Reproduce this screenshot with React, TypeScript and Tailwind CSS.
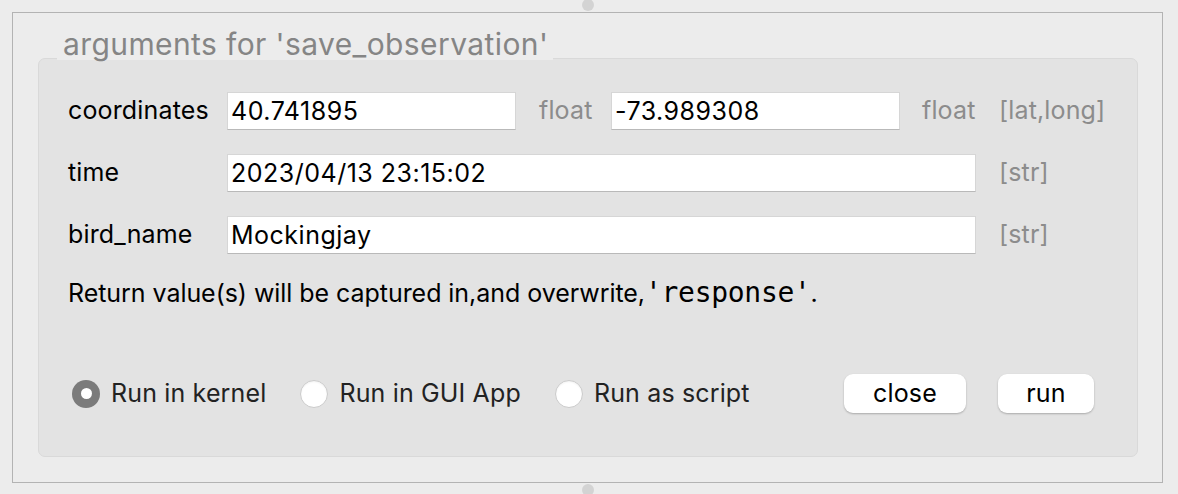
import { useState } from 'react'

const font = { fontFamily: 'Inter, "Noto Sans", sans-serif' }

function Field({ value, wide }: { value: string; wide?: boolean }) {
  return (
    <input
      type="text"
      defaultValue={value}
      className={`h-[38px] bg-white border border-[#d6d6d6] border-b-[#b9b9b9] px-[3px] text-[25px] tracking-[0.5px] text-black outline-none ${
        wide ? 'col-span-4 w-[749px]' : 'w-[289px]'
      }`}
    />
  )
}

function Radio({ checked, label, onClick }: { checked: boolean; label: string; onClick: () => void }) {
  return (
    <button onClick={onClick} className="flex items-center gap-[11px] cursor-default">
      {checked ? (
        <span className="w-[28px] h-[28px] rounded-full bg-[#7b7b7b] flex items-center justify-center">
          <span className="w-[11px] h-[11px] rounded-full bg-white" />
        </span>
      ) : (
        <span className="w-[28px] h-[28px] rounded-full bg-white border border-[#cbcbcb] shadow-[inset_0_1px_2px_rgba(0,0,0,0.06)]" />
      )}
      <span className="text-[25px] tracking-[0.15px] text-[#222]">{label}</span>
    </button>
  )
}

export default function App() {
  const [mode, setMode] = useState('kernel')

  return (
    <div className="w-[1178px] h-[494px] bg-[#ececec] pt-[12px] pl-[12px]" style={font}>
      <div className="relative w-[1151px] h-[471px] border border-[#b3b3b3] pt-[45px] pl-[25px]">
        {/* resize handles */}
        <span className="absolute left-[569px] -top-[14px] w-[12px] h-[12px] rounded-full bg-[#d3d3d3]" />
        <span className="absolute left-[569px] -bottom-[14px] w-[12px] h-[12px] rounded-full bg-[#d3d3d3]" />

        <div className="relative w-[1100px] h-[399px] rounded-[7px] bg-[#e3e3e3] border border-[#d9d9d9] pt-[33px] pl-[29px] text-[25px] tracking-[0.15px]">
          <div className="absolute left-[18px] -top-[30px] h-[31px] w-[496px] bg-[#ececec] pl-[6px] text-[30px] tracking-[0.4px] leading-[30px] text-[#858585]">
            arguments for 'save_observation'
          </div>

          <div className="grid grid-cols-[159px_289px_95px_289px_76px_auto] gap-y-[24px] items-center">
            <div className="text-black">coordinates</div>
            <Field value="40.741895" />
            <div className="pl-[23px] text-[#8c8c8c]">float</div>
            <Field value="-73.989308" />
            <div className="pl-[22px] text-[#8c8c8c]">float</div>
            <div className="pl-[23px] text-[#8c8c8c]">[lat,long]</div>

            <div className="text-black">time</div>
            <Field value="2023/04/13 23:15:02" wide />
            <div className="pl-[23px] text-[#8c8c8c]">[str]</div>

            <div className="text-black">bird_name</div>
            <Field value="Mockingjay" wide />
            <div className="pl-[23px] text-[#8c8c8c]">[str]</div>
          </div>

          <div className="mt-[24px] leading-[30px] tracking-[-0.05px] text-black">
            Return value(s) will be captured in,and overwrite,
            <span className="text-[28px] tracking-[-0.3px]" style={{ fontFamily: '"DejaVu Sans Mono", monospace' }}>
              'response'
            </span>
            .
          </div>

          <div className="mt-[66px] flex items-center pl-[4px] pr-[43px]">
            <div className="flex items-center gap-[34px]">
              <Radio checked={mode === 'kernel'} label="Run in kernel" onClick={() => setMode('kernel')} />
              <Radio checked={mode === 'gui'} label="Run in GUI App" onClick={() => setMode('gui')} />
              <Radio checked={mode === 'script'} label="Run as script" onClick={() => setMode('script')} />
            </div>
            <div className="ml-auto flex items-center gap-[32px]">
              <button className="w-[122px] h-[39px] rounded-[9px] bg-white text-black shadow-[0_1px_2px_rgba(0,0,0,0.25)]">
                close
              </button>
              <button className="w-[96px] h-[39px] rounded-[9px] bg-white text-black shadow-[0_1px_2px_rgba(0,0,0,0.25)]">
                run
              </button>
            </div>
          </div>
        </div>
      </div>
    </div>
  )
}
